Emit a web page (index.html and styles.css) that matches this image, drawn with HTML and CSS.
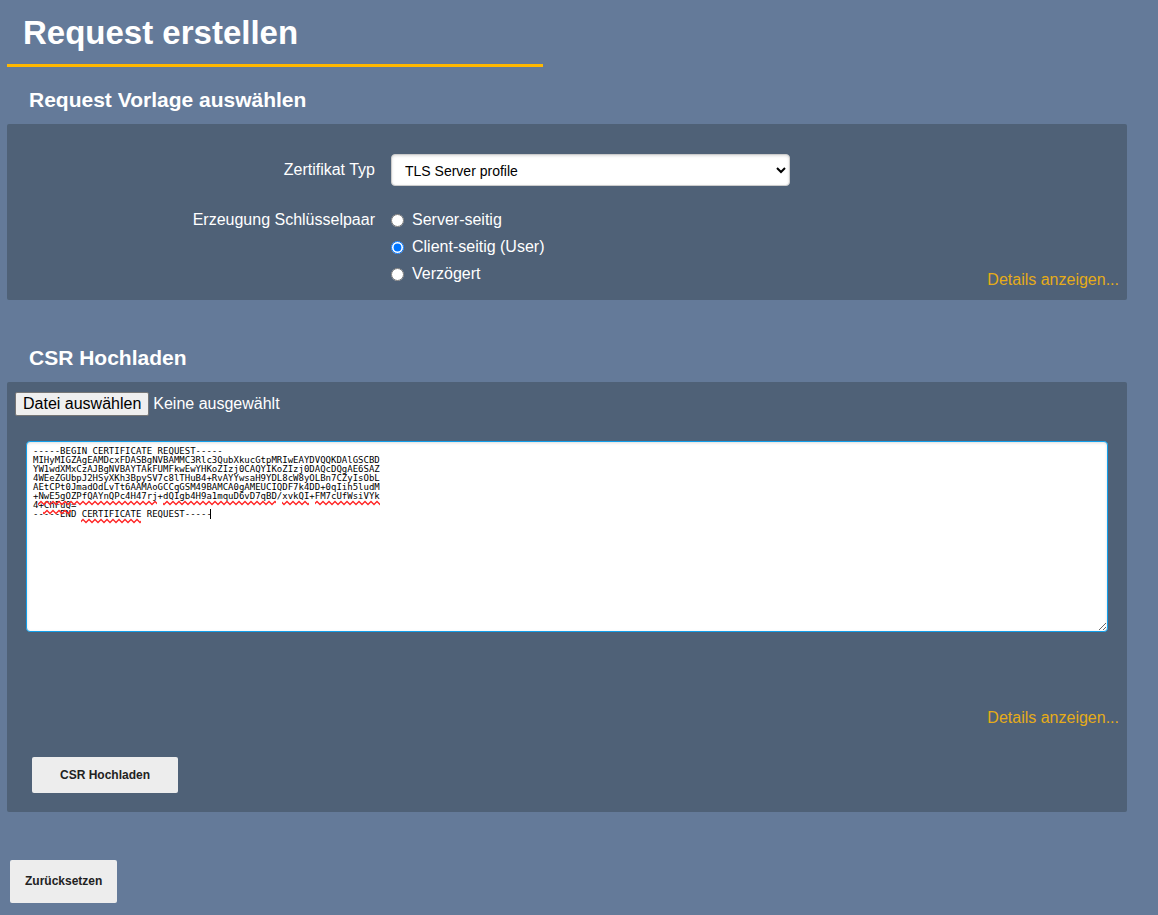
FILE: index.html
```html
<!DOCTYPE html>
<html lang="de">
<head>
<meta charset="utf-8">
<title>Request erstellen</title>
<link rel="stylesheet" href="styles.css">
</head>
<body>
<main class="page">
  <h1 class="page-title">Request erstellen</h1>
  <form class="request-form">
    <section>
      <h2 class="section-title">Request Vorlage auswählen</h2>
      <div class="panel panel-template">
        <div class="fields">
          <label class="field-label field-label-select" for="type">Zertifikat Typ</label>
          <select class="select" id="type"><option>TLS Server profile</option></select>
          <span class="field-label" id="keygen">Erzeugung Schlüsselpaar</span>
          <div class="radios" role="radiogroup" aria-labelledby="keygen">
            <label class="radio"><input type="radio" name="keygen" value="server">Server-seitig</label>
            <label class="radio"><input type="radio" name="keygen" value="client" checked>Client-seitig (User)</label>
            <label class="radio"><input type="radio" name="keygen" value="later">Verzögert</label>
          </div>
        </div>
        <a class="details" href="#details-template">Details anzeigen...</a>
      </div>
    </section>
    <section>
      <h2 class="section-title">CSR Hochladen</h2>
      <div class="panel panel-csr">
        <div class="file">
          <input class="file-input" type="file" id="csr-file">
          <label class="file-button" for="csr-file">Datei auswählen</label>
          <span>Keine ausgewählt</span>
        </div>
        <div class="editor">
          <textarea class="csr" aria-label="CSR" spellcheck="false">-----BEGIN CERTIFICATE REQUEST-----
MIHyMIGZAgEAMDcxFDASBgNVBAMMC3Rlc3QubXkucGtpMRIwEAYDVQQKDAlGSCBD
YW1wdXMxCzAJBgNVBAYTAkFUMFkwEwYHKoZIzj0CAQYIKoZIzj0DAQcDQgAE6SAZ
4WEeZGUbpJ2HSyXKh3BpySV7c8lTHuB4+RvAYYwsaH9YDL8cW8yOLBn7CZyIsObL
AEtCPt0JmadOdLvTt6AAMAoGCCqGSM49BAMCA0gAMEUCIQDF7k4DD+0qIih5ludM
+NwE5gOZPfQAYnQPc4H47rj+dQIgb4H9a1mquD6vD7qBD/xvkQI+FM7cUfWsiVYk
4+ChFuQ=
-----END CERTIFICATE REQUEST-----</textarea>
          <svg class="marks" width="360" height="90" aria-hidden="true">
            <defs>
              <pattern id="wave" width="6" height="9" patternUnits="userSpaceOnUse" patternTransform="translate(0 2)">
                <path d="M-3 4.500L0 7.500L3 4.500L6 7.500L9 4.500" fill="none" stroke="#f22" stroke-width="1.3"/>
              </pattern>
            </defs>
            <g fill="url(#wave)">
              <rect x="12" y="59" width="119" height="6"/>
              <rect x="137" y="59" width="113" height="6"/>
              <rect x="256" y="59" width="27" height="6"/>
              <rect x="289" y="59" width="65" height="6"/>
              <rect x="17" y="68" width="28" height="6"/>
              <rect x="55" y="77" width="60" height="6"/>
            </g>
            <path d="M184.500 68V78" stroke="#000"/>
          </svg>
        </div>
        <a class="details" href="#details-csr">Details anzeigen...</a>
        <button class="button button-upload" type="button">CSR Hochladen</button>
      </div>
    </section>
    <button class="button button-reset" type="reset">Zurücksetzen</button>
  </form>
</main>
</body>
</html>
```
FILE: styles.css
```css
* { box-sizing: border-box; }

body {
  margin: 0;
  background: #647a99;
  color: #fff;
  font: 16px/20px "Liberation Sans", Arial, sans-serif;
}

.page { padding: 0 31px 12px 7px; }

.page-title {
  width: 48%;
  max-width: 536px;
  margin: 0;
  padding: 13px 16px 11px;
  border-bottom: 3px solid #ffb800;
  font-size: 33px;
  line-height: 40px;
}

.section-title {
  margin: 0;
  padding: 21px 22px 12px;
  font-size: 21px;
  line-height: 24px;
}

.panel {
  display: flex;
  flex-direction: column;
  padding: 10px 8px 19px;
  border-radius: 2px;
  background: #4f6177;
}

.panel-template {
  flex-direction: row;
  justify-content: space-between;
  align-items: flex-end;
  margin-bottom: 25px;
  padding: 30px 8px 10px;
}

.fields {
  display: grid;
  grid-template-columns: 360px 399px;
  column-gap: 16px;
  row-gap: 24px;
  padding-bottom: 6px;
}

.field-label { text-align: right; }
.field-label-select { padding-top: 6px; }
.radios { display: flex; flex-direction: column; gap: 7px; }

.select {
  height: 32px;
  padding: 2px 0 0 9px;
  border: 1px solid #ccc;
  border-radius: 4px;
  background-color: #fff;
  box-shadow: inset 0 1px 3px #ddd;
  color: #000;
  font: 14px "Liberation Sans", Arial, sans-serif;
}

.radio { display: flex; align-items: center; gap: 8px; }
.radio input { width: 13px; height: 13px; margin: 0; }

.details { align-self: flex-end; color: #e6ac17; text-decoration: none; }

.file { display: flex; align-items: center; gap: 4px; position: relative; }
.file-input { position: absolute; width: 132px; height: 24px; opacity: 0; }
.file-button {
  padding: 1px 7px;
  border: 1px solid #767676;
  border-radius: 2px;
  background: #efefef;
  color: #000;
}

.editor { position: relative; margin: 25px 11px 76px; }

.csr {
  display: block;
  width: 100%;
  height: 191px;
  padding: 5px 6px;
  border: 1px solid #129fea;
  border-radius: 4px;
  outline: 0;
  background: #fff;
  box-shadow: inset 0 1px 3px #ddd;
  color: #000;
  font: 9px/9px "DejaVu Sans Mono", monospace;
}

.marks { position: absolute; top: 0; left: 0; pointer-events: none; }

.button {
  border: 0;
  border-radius: 2px;
  background: #ededed;
  color: #222;
  font: bold 12px/20px "Liberation Sans", Arial, sans-serif;
}

.button-upload { align-self: flex-start; margin: 29px 17px 0; padding: 8px 28px; }
.button-reset { margin: 48px 3px 0; padding: 11px 15px 12px; }
```
